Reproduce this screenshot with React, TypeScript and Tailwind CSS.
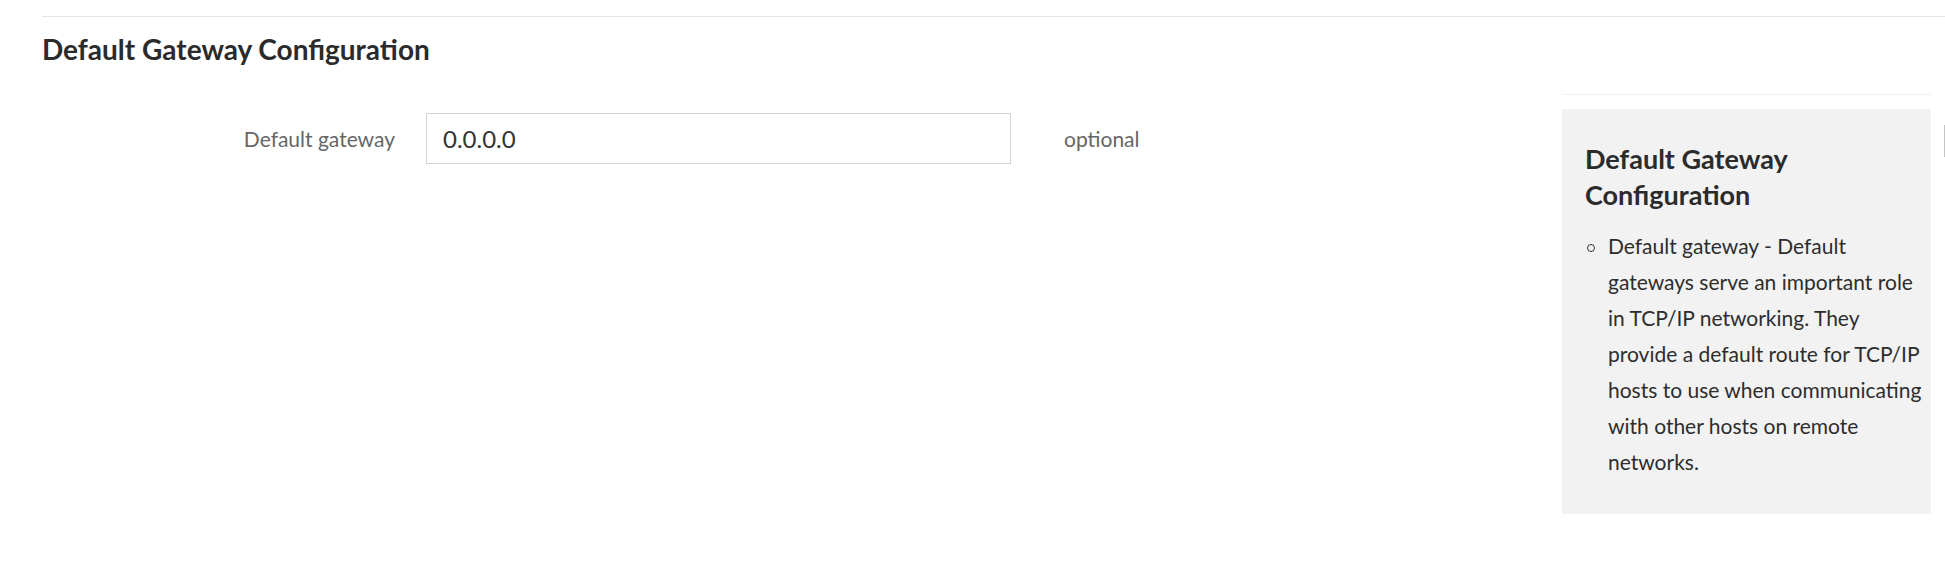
import React from 'react';

const helpText =
  'Default gateway - Default gateways serve an important role in TCP/IP networking. They provide a default route for TCP/IP hosts to use when communicating with other hosts on remote networks.';

function HelpPanel() {
  return (
    <aside className="mr-[14px] w-[369px] shrink-0 border-t border-[#f0f0f0] pt-[14px]">
      <div className="bg-[#f2f2f2] pb-[34px] pl-[23px] pr-[2px] pt-[32px]">
        <h3 className="text-[27px] font-bold leading-[36px] text-[#2b2b2b]">
          Default Gateway Configuration
        </h3>
        <ul className="mt-[15px]">
          <li className="flex text-[21px] leading-[36px] text-[#2d2d2d]">
            <span className="mt-[16px] mr-[13px] ml-[2px] h-[8px] w-[8px] shrink-0 rounded-full border border-[#333]" />
            <span>{helpText}</span>
          </li>
        </ul>
      </div>
    </aside>
  );
}

export default function App() {
  return (
    <div className="relative h-[566px] w-full overflow-hidden bg-white pl-[42px] font-['Lato',sans-serif]">
      <div className="pt-[16px]">
        <div className="border-t border-[#e6e6e6]" />
      </div>
      <h2 className="mt-[14px] text-[28px] font-bold leading-[36px] text-[#2b2b2b]">
        Default Gateway Configuration
      </h2>
      <div className="mt-[27px] flex items-start">
        <div className="flex flex-1 items-center pt-[19px]">
          <label className="w-[353px] text-right text-[21px] text-[#666]">
            Default gateway
          </label>
          <input
            className="ml-[31px] h-[51px] w-[585px] border border-[#d4d4d4] px-[16px] text-[24px] text-[#333] outline-none"
            defaultValue="0.0.0.0"
          />
          <span className="ml-[53px] text-[21px] text-[#666]">optional</span>
        </div>
        <HelpPanel />
      </div>
      <div className="absolute right-0 top-[125px] h-[32px] w-px bg-[#c4c4c4]" />
    </div>
  );
}
